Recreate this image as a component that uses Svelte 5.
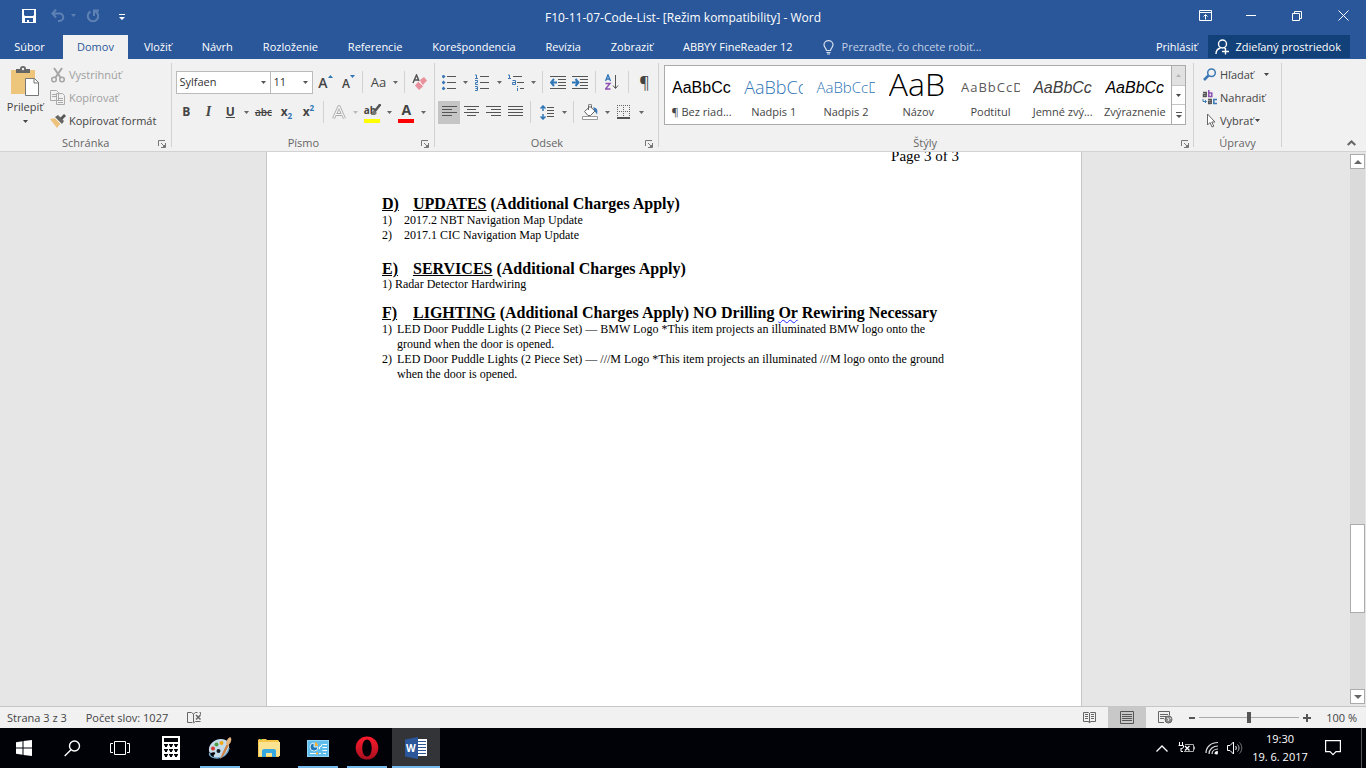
<script>
  const tabs = ['Vložiť', 'Návrh', 'Rozloženie', 'Referencie', 'Korešpondencia', 'Revízia', 'Zobraziť', 'ABBYY FineReader 12'];
  const styles = [
    { name: '¶ Bez riad...', sample: 'AaBbCc', cls: 'plain' },
    { name: 'Nadpis 1', sample: 'AaBbCc', cls: 'h1' },
    { name: 'Nadpis 2', sample: 'AaBbCcD', cls: 'h2' },
    { name: 'Názov', sample: 'AaB', cls: 'big' },
    { name: 'Podtitul', sample: 'AaBbCcD', cls: 'sub' },
    { name: 'Jemné zvý...', sample: 'AaBbCc', cls: 'subtle' },
    { name: 'Zvýraznenie', sample: 'AaBbCc', cls: 'emph' }
  ];
  let zoom = $state(50);
</script>

{#snippet caret()}
  <svg width="5" height="3" viewBox="0 0 5 3"><path d="M0 0h5L2.500 3z" fill="currentColor" /></svg>
{/snippet}

{#snippet drop(label, off = false)}
  <button class="drop" class:off aria-label={label}>{@render caret()}</button>
{/snippet}

{#snippet launcher(label)}
  <button class="launcher" aria-label={label}>
    <svg width="8" height="8" viewBox="0 0 8 8" fill="none" stroke="#777"><path d="M.5 6V.5H7M3 3l3.500 3.500M7.500 3v4.500H3" /><path d="M7 5v2H5z" fill="#777" /></svg>
  </button>
{/snippet}

{#snippet lines(rows, w = 15)}
  <svg width={w} height="13" viewBox="0 0 15 13" stroke="#555">
    {#each rows as r, i}<path d={`M${r[0]} ${i * 3 + 0.5}H${r[1]}`} />{/each}
  </svg>
{/snippet}

<div class="app">
  <header class="titlebar">
    <div class="qat">
      <button aria-label="Uložiť">
        <svg width="14" height="14" viewBox="0 0 14 14"><path d="M0 0h14v14H0z" fill="#fff" /><path d="M2 1h10v5l-1 1H3L2 6zM3 9h8v4H7v-2H5v2H3z" fill="#2a579a" /></svg>
      </button>
      <button class="undo" aria-label="Späť">
        <svg width="14" height="13" viewBox="0 0 14 13" fill="none" stroke="#5f82b5" stroke-width="2"><path d="M5 .5L1.500 4.500 5 8.500M2 4.500h6.500a3.700 3.700 0 0 1 0 7.500H7" /></svg>
      </button>
      <button class="qdrop" aria-label="História">{@render caret()}</button>
      <button class="redo" aria-label="Zopakovať">
        <svg width="14" height="14" viewBox="0 0 14 14" fill="none" stroke="#5f82b5" stroke-width="2"><path d="M4.500 2.500a5.200 5.200 0 1 0 5 0M8 7V1.500h5" /></svg>
      </button>
      <button class="custom" aria-label="Prispôsobiť panel">
        <svg width="6" height="6" viewBox="0 0 6 6" fill="#fff"><path d="M0 0h6v1H0zM0 3h6L3 6z" /></svg>
      </button>
    </div>
    <h1>F10-11-07-Code-List- [Režim kompatibility] - Word</h1>
    <div class="window">
      <button aria-label="Možnosti pása s nástrojmi"><svg width="13" height="11" viewBox="0 0 13 11" fill="none" stroke="#fff"><path d="M.5.5h12v10H.5zM.5 2.500h12M6.500 9.500V5M4.500 6.500l2-2 2 2" /></svg></button>
      <button aria-label="Minimalizovať"><svg width="10" height="11" viewBox="0 0 10 11" stroke="#fff"><path d="M0 5.500h10" /></svg></button>
      <button aria-label="Obnoviť"><svg width="10" height="10" viewBox="0 0 10 10" fill="none" stroke="#fff"><path d="M.5 2.500h7v7h-7zM2.500 2.500v-2h7v7h-2" /></svg></button>
      <button aria-label="Zavrieť"><svg width="11" height="11" viewBox="0 0 11 11" stroke="#fff"><path d="M.5.5l10 10M10.500.5l-10 10" /></svg></button>
    </div>
  </header>

  <nav class="tabs">
    <button class="file">Súbor</button>
    <button class="active">Domov</button>
    {#each tabs as t}<button class="tab">{t}</button>{/each}
    <label class="tell">
      <svg width="11" height="15" viewBox="0 0 11 15" fill="none" stroke="#d5dfee" stroke-width="1.200"><path d="M3.500 10.500C3.500 8.500 1 7.500 1 4.800a4.500 4.200 0 0 1 9 0c0 2.700-2.500 3.700-2.500 5.700zM3.500 12.500h4M4 14h3" /></svg>
      <input type="text" placeholder="Prezraďte, čo chcete robiť..." aria-label="Prezraďte, čo chcete robiť" />
    </label>
    <button class="login">Prihlásiť</button>
    <button class="share">
      <svg width="15" height="16" viewBox="0 0 15 16" fill="none" stroke="#fff" stroke-width="1.400"><circle cx="7.500" cy="5" r="4" /><path d="M1 15c0-3.500 2-5.500 4.500-6M9.500 9l1 1M7 12.500h7M10.500 9v6.500" /></svg>
      Zdieľaný prostriedok
    </button>
  </nav>

  <section class="ribbon">
    <div class="group">
      <div class="body cliprow">
        <button class="paste">
          <svg width="30" height="31" viewBox="0 0 30 31"><path d="M1 4h24v24H1z" fill="#edc67b" /><path d="M6 3h4a3 3 0 0 1 6 0h4v4H6z" fill="#666" /><circle cx="13" cy="3" r="1.200" fill="#f1f1f1" /><path d="M15.500 12.500h9l4 4v13h-13z" fill="#fff" stroke="#777" /><path d="M24 12v5h5" fill="none" stroke="#777" /></svg>
          <span>Prilepiť</span>{@render caret()}
        </button>
        <div class="stack">
          <button class="dim"><svg width="16" height="16" viewBox="0 0 16 16" fill="none" stroke="#a5a5a5" stroke-width="1.500"><path d="M4 1l6.500 9.500M12 1L5.500 10.500" stroke-width="2" /><circle cx="4" cy="12.500" r="2.300" /><circle cx="12" cy="12.500" r="2.300" /></svg>Vystrihnúť</button>
          <button class="dim"><svg width="16" height="15" viewBox="0 0 16 15" fill="#f1f1f1" stroke="#aaa"><path d="M.5.5h6l2 2v8h-8zM6.500 3.500h6l2 2v9h-8z" /><path d="M2 4.500h4M2 6.500h4M8 8.500h5M8 10.500h5M8 12.500h5" /></svg>Kopírovať</button>
          <button><svg width="16" height="15" viewBox="0 0 16 15"><path d="M0 6l6-1 5 5-4 5z" fill="#edc27a" /><path d="M5 4l3-2 6 6-2 3z" fill="#666" /><path d="M10 5l4-4 2 2-4 4z" fill="#555" /><path d="M5 5l6 6" stroke="#f1f1f1" /></svg>Kopírovať formát</button>
        </div>
      </div>
      <div class="caption">Schránka{@render launcher('Schránka')}</div>
    </div>

    <div class="group">
      <div class="body rows">
        <div class="row">
          <label class="combo face"><input type="text" value="Sylfaen" aria-label="Písmo" />{@render caret()}</label>
          <label class="combo size"><input type="text" value="11" aria-label="Veľkosť písma" />{@render caret()}</label>
          <button class="tool fontup" aria-label="Zväčšiť písmo">A<svg width="5" height="3" viewBox="0 0 5 3"><path d="M0 3h5L2.500 0z" fill="#2e75b6" /></svg></button>
          <button class="tool fontdown" aria-label="Zmenšiť písmo">A<svg width="5" height="3" viewBox="0 0 5 3"><path d="M0 0h5L2.500 3z" fill="#2e75b6" /></svg></button>
          <i class="sep tight"></i>
          <button class="tool case">Aa</button>{@render drop('Veľké a malé písmená')}
          <i class="sep"></i>
          <button class="tool" aria-label="Vymazať formátovanie"><svg width="16" height="17" viewBox="0 0 16 17"><path d="M1 9L4.500 1 7 7M2.500 6h4" stroke="#555" stroke-width="1.500" fill="none" /><path d="M8 6l4-3 3 3.500-4.500 5z" fill="#e8919d" /><path d="M7 7l4.500 5L7 16l-4-4.500z" fill="#e8919d" /><path d="M6.500 7.500l5 4.500" stroke="#fff" /></svg></button>
        </div>
        <div class="row">
          <button class="tool b">B</button><button class="tool it">I</button><button class="tool u">U</button>{@render drop('Podčiarknutie')}
          <button class="tool strike">abc</button>
          <button class="tool b">x<sub>2</sub></button><button class="tool b">x<sup>2</sup></button>
          <i class="sep"></i>
          <button class="tool" aria-label="Textové efekty"><svg width="14" height="15" viewBox="0 0 14 15"><path d="M1.500 13.500L7 1.500l5.500 12M4 9.500h6" fill="none" stroke="#aaa" stroke-width="3" /><path d="M1.500 13.500L7 1.500l5.500 12M4 9.500h6" fill="none" stroke="#f6f6f6" stroke-width="1.200" /></svg></button>{@render drop('Efekty', true)}
          <button class="tool mark" aria-label="Zvýraznenie textu"><span>ab</span><svg width="10" height="11" viewBox="0 0 10 11"><path d="M9.500 0L4 7" stroke="#555" stroke-width="2.500" /><path d="M0 11l2-5 4 3-2 2z" fill="#777" /></svg></button>{@render drop('Farba zvýraznenia')}
          <button class="tool color" aria-label="Farba písma">A</button>{@render drop('Farba')}
        </div>
      </div>
      <div class="caption">Písmo{@render launcher('Písmo')}</div>
    </div>

    <div class="group">
      <div class="body rows">
        <div class="row">
          <button class="tool" aria-label="Odrážky"><svg width="14" height="15" viewBox="0 0 14 15"><path d="M1 0h1v1h1v1H2v1H1V2H0V1h1zM1 6h1v1h1v1H2v1H1V8H0V7h1zM1 12h1v1h1v1H2v1H1v-1H0v-1h1z" fill="#3b78b5" stroke="#3b78b5" stroke-width=".6" /><path d="M5 1.500h9M5 7.500h9M5 13.500h9" stroke="#555" /></svg></button>{@render drop('Typ odrážok')}
          <button class="tool wide" aria-label="Číslovanie"><svg width="14" height="17" viewBox="0 0 14 17" fill="none" stroke="#3b78b5"><path d="M0 1h1.500v4M0 4.500h3M0 6.500h2.500v2H.5v2H3M0 12.500h2.500v4H0M.5 14.500h2" /><path d="M5 2.500h9M5 8.500h9M5 14.500h9" stroke="#555" /></svg></button>{@render drop('Typ číslovania')}
          <button class="tool wide" aria-label="Viacúrovňový zoznam"><svg width="17" height="17" viewBox="0 0 17 17" fill="none" stroke="#3b78b5"><path d="M0 1h1.500v4M0 4.500h3M4.500 6.500h3v4h-3v-2h3M9.500 12v1M9.500 14v3" /><path d="M5 2.500h9M9 8.500h7M12 14.500h4" stroke="#555" /></svg></button>{@render drop('Typ zoznamu')}
          <i class="sep"></i>
          <button class="tool" aria-label="Zmenšiť zarážku"><svg width="16" height="13" viewBox="0 0 16 13"><path d="M0 .5h16M8 3.500h8M8 6.500h8M8 9.500h8M0 12.500h16" stroke="#555" /><path d="M7 6.500H1M4 3L1 6.500 4 10" fill="none" stroke="#2e75b6" stroke-width="2" /></svg></button>
          <button class="tool" aria-label="Zväčšiť zarážku"><svg width="16" height="13" viewBox="0 0 16 13"><path d="M0 .5h16M8 3.500h8M8 6.500h8M8 9.500h8M0 12.500h16" stroke="#555" /><path d="M0 6.500h6M3.500 3l3 3.500-3 3.500" fill="none" stroke="#2e75b6" stroke-width="2" /></svg></button>
          <i class="sep"></i>
          <button class="tool wide" aria-label="Zoradiť"><svg width="14" height="16" viewBox="0 0 14 16" fill="none"><path d="M.5 7L3 .8 5.500 7M1.500 5h3" stroke="#2e75b6" stroke-width="1.300" /><path d="M.5 9.500h4.500l-4.500 5.500h5" stroke="#8a4fb0" stroke-width="1.400" /><path d="M10.500 1v13M8 11.500l2.500 3 2.500-3" stroke="#555" /></svg></button>
          <i class="sep"></i>
          <button class="tool pil">¶</button>
        </div>
        <div class="row">
          <button class="tool sel" aria-label="Zarovnať doľava">{@render lines([[0, 15], [0, 10], [0, 15], [0, 10]])}</button>
          <button class="tool" aria-label="Centrovať">{@render lines([[0, 15], [3, 12], [0, 15], [3, 12]])}</button>
          <button class="tool" aria-label="Zarovnať doprava">{@render lines([[0, 15], [5, 15], [0, 15], [5, 15]])}</button>
          <button class="tool" aria-label="Podľa okraja">{@render lines([[0, 15], [0, 15], [0, 15], [0, 15]])}</button>
          <i class="sep"></i>
          <button class="tool wide" aria-label="Riadkovanie"><svg width="14" height="15" viewBox="0 0 14 15" fill="none"><path d="M3 1v5M.5 3.500L3 1l2.500 2.500M3 9v5M.5 11.500L3 14l2.500-2.500" stroke="#2e75b6" stroke-width="1.500" /><path d="M7 2.500h7M7 5.500h7M7 8.500h7M7 11.500h7" stroke="#555" /></svg></button>{@render drop('Hodnota riadkovania')}
          <i class="sep"></i>
          <button class="tool wide" aria-label="Podfarbenie"><svg width="17" height="16" viewBox="0 0 17 16"><path d="M2.500 7.500L8 2.500l5 4.500-4.500 4.500H6z" fill="#fff" stroke="#666" /><path d="M6.500 6V1.500a1.500 1.500 0 0 1 3 0V4" fill="none" stroke="#666" /><path d="M11 3.500c4 0 5 2 4 7l-2-3z" fill="#3b78b5" /><path d="M.5 12.500h15v3H.5z" fill="#fff" stroke="#999" /></svg></button>{@render drop('Farba podfarbenia')}
          <button class="tool wide" aria-label="Orámovanie"><svg width="14" height="14" viewBox="0 0 14 14" fill="none" stroke="#666"><path d="M0 .5h14M0 6.500h14M.5 0v12M6.500 0v12M12.500 0v12" stroke-dasharray="1 1" /><path d="M0 13h13" stroke-width="2" stroke="#555" /></svg></button>{@render drop('Typ orámovania')}
        </div>
      </div>
      <div class="caption">Odsek{@render launcher('Odsek')}</div>
    </div>

    <div class="group stylegroup">
      <div class="body">
        <div class="gallery">
          <div class="items">
            {#each styles as s}
              <button><span class="sample {s.cls}">{s.sample}</span><span class="name">{s.name}</span></button>
            {/each}
          </div>
          <div class="gscroll">
            <button class="first" aria-label="Predchádzajúce štýly"><svg width="5" height="3" viewBox="0 0 5 3"><path d="M0 3h5L2.500 0z" fill="#b5b5b5" /></svg></button>
            <button aria-label="Ďalšie štýly">{@render caret()}</button>
            <button aria-label="Všetky štýly"><svg width="6" height="6" viewBox="0 0 6 6" fill="#555"><path d="M0 0h6v1H0zM0 3h6L3 6z" /></svg></button>
          </div>
        </div>
      </div>
      <div class="caption">Štýly{@render launcher('Štýly')}</div>
    </div>

    <div class="group edit">
      <div class="body stack">
        <button><svg width="14" height="13" viewBox="0 0 14 13" fill="none"><circle cx="8.500" cy="4.700" r="3.800" stroke="#3b78b5" stroke-width="1.500" /><path d="M5.500 7.500L1 12" stroke="#3b78b5" stroke-width="2.500" /></svg><span>Hľadať</span><em>{@render caret()}</em></button>
        <button aria-label="Nahradiť"><svg width="16" height="15" viewBox="0 0 16 15" fill="none" stroke-width="1.500"><path d="M1 2.500h3.200V7M4.200 4.500H1.500V6.500h2.700" stroke="#555" /><path d="M6.800 0v6.500h3V3h-3" stroke="#8a4fb0" /><path d="M1 9v2.500h3M3 10l1.500 1.500L3 13" stroke="#3b78b5" stroke-width="1" /><path d="M6 9.500h3.200V14M9.200 11.500H6.700v2h2.500" stroke="#555" /><path d="M15 9.500h-3.200v4H15" stroke="#3b78b5" /></svg><span>Nahradiť</span></button>
        <button><svg width="14" height="15" viewBox="0 0 14 15"><path d="M4.500 1v11l2.500-2.500 2 4.500 1.800-.8-2-4.200h3.200z" fill="#fff" stroke="#666" /></svg><span>Vybrať</span>{@render caret()}</button>
      </div>
      <div class="caption">Úpravy</div>
    </div>
    <div class="tail"><button aria-label="Zbaliť pás s nástrojmi"><svg width="9" height="6" viewBox="0 0 9 6" fill="none" stroke="#666" stroke-width="2"><path d="M.7 5L4.500 1.400 8.300 5" /></svg></button></div>
  </section>

  <main>
    <div class="canvas">
      <article>
        <p class="pageno">Page 3 of 3</p>
        <h2><u>D)</u><span><u>UPDATES</u> (Additional Charges Apply)</span></h2>
        <ol class="loose">
          <li><b>1)</b><span>2017.2 NBT Navigation Map Update</span></li>
          <li><b>2)</b><span>2017.1 CIC Navigation Map Update</span></li>
        </ol>
        <h2><u>E)</u><span><u>SERVICES</u> (Additional Charges Apply)</span></h2>
        <p class="item">1) Radar Detector Hardwiring</p>
        <h2><u>F)</u><span><u>LIGHTING</u> (Additional Charges Apply) NO Drilling <span class="wavy">Or</span> Rewiring Necessary</span></h2>
        <ol>
          <li><b>1)</b><span>LED Door Puddle Lights (2 Piece Set) — BMW Logo *This item projects an illuminated BMW logo onto the<br />ground when the door is opened.</span></li>
          <li><b>2)</b><span>LED Door Puddle Lights (2 Piece Set) — ///M Logo *This item projects an illuminated ///M logo onto the ground<br />when the door is opened.</span></li>
        </ol>
      </article>
    </div>
    <div class="scroll">
      <button aria-label="Nahor"><svg width="8" height="4" viewBox="0 0 8 4"><path d="M0 4h8L4 0z" fill="#666" /></svg></button>
      <div class="track"><div class="thumb"></div></div>
      <button aria-label="Nadol"><svg width="8" height="4" viewBox="0 0 8 4"><path d="M0 0h8L4 4z" fill="#666" /></svg></button>
    </div>
  </main>

  <footer class="status">
    <span>Strana 3 z 3</span>
    <span>Počet slov: 1027</span>
    <svg width="15" height="13" viewBox="0 0 15 13" fill="none" stroke="#666"><path d="M5.500 11.500H.5v-10h4l2 1.500v8.500M6.500 3l2-1.500h2M6.500 12l2-1.500h5M12.500 1.500h1v2" /><path d="M9 4l4.500 4.500M13.500 4L9 8.500" stroke-width="1.500" /></svg>
    <div class="views">
      <button aria-label="Režim čítania"><svg width="13" height="13" viewBox="0 0 13 13" fill="none" stroke="#666"><path d="M.5 1.500h5l1 1 1-1h5v9h-5l-1 1.500-1-1.500h-5zM6.500 2v10M2 3.500h3M2 5.500h3M2 7.500h3M8 3.500h3M8 5.500h3M8 7.500h3" /></svg></button>
      <button class="on" aria-label="Rozloženie pri tlači"><svg width="14" height="13" viewBox="0 0 14 13" fill="none" stroke="#555"><path d="M.5.5h13v12H.5zM2 3.500h10M2 5.500h10M2 7.500h10M2 9.500h10" /></svg></button>
      <button aria-label="Webové rozloženie"><svg width="15" height="13" viewBox="0 0 15 13" fill="none" stroke="#666"><path d="M6 11.500H.5V.5h11v4M2 3.500h8M2 5.500h6M2 7.500h4" /><circle cx="10.500" cy="8.500" r="3.500" fill="#888" /><path d="M9 7l2 1-1 2M12 6.500l1 1.500" stroke="#eee" /></svg></button>
    </div>
    <div class="zoomer">
      <button aria-label="Oddialiť"><svg width="6" height="8" viewBox="0 0 6 8"><path d="M0 3h6v2H0z" fill="#555" /></svg></button>
      <input type="range" min="0" max="100" bind:value={zoom} aria-label="Lupa" />
      <button aria-label="Priblížiť"><svg width="8" height="8" viewBox="0 0 8 8"><path d="M0 3h3V0h2v3h3v2H5v3H3V5H0z" fill="#555" /></svg></button>
    </div>
    <span>100 %</span>
  </footer>

  <div class="taskbar">
    <button aria-label="Štart"><svg width="16" height="16" viewBox="0 0 16 16" fill="#fff"><path d="M0 2.200L6.500 1.300v6.200H0zM7.500 1.100L16 0v7.500H7.500zM0 8.500h6.500v6.200L0 13.800zM7.500 8.500H16V16l-8.500-1.100z" /></svg></button>
    <button aria-label="Hľadať"><svg width="17" height="17" viewBox="0 0 17 17" fill="none" stroke="#fff" stroke-width="1.400"><circle cx="10.500" cy="6" r="5" /><path d="M7 9.700L.7 16" /></svg></button>
    <button aria-label="Zobrazenie úloh"><svg width="20" height="14" viewBox="0 0 20 14" fill="none" stroke="#fff"><path d="M4.500.5h11v13h-11zM3 2.500H.5v9H3M17 2.500h2.500v9H17" /></svg></button>
    <button class="first" aria-label="Kalkulačka"><svg width="18" height="24" viewBox="0 0 18 24"><path d="M0 0h18v24H0z" fill="#fff" /><path d="M2 2h14v4H2z" fill="#000208" /><path d="M2 8h4v1.500H5V11H3V9.500H2zM7 8h4v1.500h-1V11H8V9.500H7zM12 8h4v1.500h-1V11h-2V9.500H12zM2 13h4v1.500H5V16H3v-1.500H2zM7 13h4v1.500h-1V16H8v-1.500H7zM12 13h4v1.500h-1V16h-2v-1.500H12zM2 18h4v1.500H5V21H3v-1.500H2zM7 18h4v1.500h-1V21H8v-1.500H7zM12 18h4v1.500h-1V21h-2v-1.500H12z" fill="#000208" /></svg></button>
    <button class="run" aria-label="Skicár"><svg width="24" height="24" viewBox="0 0 24 24"><path d="M1 15C0 9 6 3 13 3c6 0 9 4 8 9-1 6-6 10-12 10-4 0-4-3-2-4 1-2-2-2-4-1-1 0-2-1-2-2z" fill="#c4dce9" /><path d="M2 17c-1 1 0 5 7 5 6 0 11-4 12-10" fill="none" stroke="#72a8c8" stroke-width="1.500" /><circle cx="5" cy="12.500" r="2" fill="#d63b2f" /><circle cx="8.500" cy="8.500" r="2" fill="#4d9e45" /><circle cx="13.500" cy="7" r="2" fill="#f2a71b" /><circle cx="10.500" cy="15" r="2" fill="#101820" /><path d="M12 23c2-5 4-10 7-15l2 1c-3 6-5 11-9 14z" fill="#cf8044" /><path d="M18 8c0-3 1-5 4-7l1 1c1 3-1 6-3 7z" fill="#e5b580" /></svg></button>
    <button aria-label="Prieskumník"><svg width="22" height="20" viewBox="0 0 22 20"><path d="M0 2l1-1h7l1 1h11l1 1v16H0z" fill="#f5c64a" /><path d="M1 4h21v14H1z" fill="#fce391" /><path d="M2 1h2v1H2z" fill="#5db85c" /><path d="M4 19v-7l2-1h10l2 1v7h-4v-4H8v4z" fill="#36a9e0" /></svg></button>
    <button class="run" aria-label="Ovládací panel"><svg width="22" height="17" viewBox="0 0 22 17"><path d="M0 0h22v17H0z" fill="#8ed3f4" /><path d="M1 1h20v15H1z" fill="#5fbdee" /><path d="M7 3v4h4a4 4 0 1 1-4-4z" fill="#1f78b8" stroke="#fff" stroke-width=".8" /><path d="M8 2a4 4 0 0 1 3 4H8z" fill="#f6b23b" /><path d="M12.500 9V7l2-1V4.500M15.500 4.500H20M15.500 7.500H20M15.500 10.500H20M3 13.500h6M12 13.500h2M16 13.500h3" stroke="#fff" fill="none" /><path d="M9 13.500h2" stroke="#f6b23b" stroke-width="2" /></svg></button>
    <button class="run" aria-label="Opera"><svg width="24" height="24" viewBox="0 0 24 24"><defs><linearGradient id="op" x2="0" y2="1"><stop stop-color="#ff1b2d" /><stop offset="1" stop-color="#a8101f" /></linearGradient></defs><path d="M12 .5a11.300 11.500 0 1 0 0 23 11.300 11.500 0 0 0 0-23zm0 3c3 0 4.700 4 4.700 8.500s-1.700 8.500-4.700 8.500-4.700-4-4.700-8.500 1.700-8.500 4.700-8.500z" fill="url(#op)" fill-rule="evenodd" /></svg></button>
    <button class="run active" aria-label="Word"><span class="wlogo"><svg width="22" height="22" viewBox="0 0 22 22"><path d="M12 2h10v17H12z" fill="#fff" /><path d="M13 4.500h8M13 7.500h8M13 10.500h8M13 13.500h8M13 16.500h8" stroke="#2b579a" /><path d="M0 2.500L13 0v22L0 19.500z" fill="#2b579a" /></svg><b>W</b></span></button>

    <div class="tray">
      <button aria-label="Skryté ikony"><svg width="12" height="7" viewBox="0 0 12 7" fill="none" stroke="#fff" stroke-width="1.300"><path d="M.5 6.500L6 1l5.500 5.500" /></svg></button>
      <svg class="bat" width="17" height="12" viewBox="0 0 17 12" fill="none" stroke="#fff"><path d="M1.500 0v3M4.500 0v3M.5 3.500h5v2L3 7M3 6v3.500h2" /><path d="M7 2.500h8.500v7H6M16.500 4.500v3" stroke="#aaa" /><path d="M7 4l4.500 4.500M11.500 4L7 8.500" stroke-width="1.300" /></svg>
      <svg class="wifi" width="14" height="14" viewBox="0 0 14 14" fill="none" stroke="#ddd" stroke-width="1.200"><path d="M1 12C1 6 6 1.500 13 1.500M4 13c0-4.500 4-8 9-8M7 13c0-3 2.500-5 6-5" /><path d="M10 13c0-1.500 1-2.500 3-2.500" /><circle cx="11.500" cy="12" r="1.500" fill="#fff" stroke="none" /></svg>
      <svg class="vol" width="17" height="14" viewBox="0 0 17 14" fill="none" stroke="#fff"><path d="M.5 4.500h2.500l3.500-3.500v12L3 9.500H.5zM8.500 5c1 1 1 3 0 4" /><path d="M10.500 3.500c2 2 2 5 0 7" stroke="#bbb" /><path d="M12.500 1.500c3 3 3 8 0 11" stroke="#777" /></svg>
      <div class="clock"><span>19:30</span><span>19. 6. 2017</span></div>
      <button class="act" aria-label="Centrum akcií"><svg width="16" height="16" viewBox="0 0 16 16" fill="none" stroke="#fff" stroke-width="1.200"><path d="M.6.6h14.800v11h-4.400l-3 3-3-3H.6z" /></svg></button>
      <i class="edge"></i>
    </div>
  </div>
</div>

<style>
  :global(body) { margin: 0; }
  .app { height: 100vh; display: flex; flex-direction: column; overflow: hidden; font: 11px/16px "Open Sans", "Noto Sans", sans-serif; color: #444; background: #e6e6e6; }
  .app * { box-sizing: border-box; }
  button { border: 0; padding: 0; background: none; font: inherit; color: inherit; display: flex; align-items: center; justify-content: center; white-space: nowrap; }
  input { font: inherit; color: inherit; border: 0; padding: 0; margin: 0; background: none; min-width: 0; outline: none; }
  svg { flex: none; display: block; }

  .titlebar { height: 35px; background: #2a579a; color: #fff; display: grid; grid-template-columns: 1fr auto 1fr; align-items: center; padding-bottom: 4px; }
  .titlebar h1 { font: inherit; font-size: 12px; margin: 0; padding-top: 4px; }
  .qat { display: flex; align-items: center; padding-left: 22px; }
  .undo { margin-left: 15px; }
  .qdrop { margin-left: 6px; color: #5f82b5; }
  .redo { margin-left: 10px; }
  .custom { margin-left: 19px; padding-top: 3px; }
  .window { display: flex; justify-content: flex-end; }
  .window button { width: 46px; height: 30px; }

  .tabs { height: 24px; background: #2a579a; color: #fff; display: flex; }
  .tabs button { padding: 0 14px; }
  .tabs .tab { margin-left: 2px; }
  .tabs .file { width: 63px; padding: 0 4px 0 0; }
  .tabs .active { background: #f1f1f1; color: #2a579a; }
  .tell { display: flex; align-items: center; gap: 8px; padding-left: 16px; flex: 1; }
  .tell input { flex: 1; }
  .tell input::placeholder { color: #c3d0e5; opacity: 1; }
  .tabs .login { padding: 0 11px; }
  .tabs .share { background: #124078; padding: 0 9px 0 7px; gap: 5px; margin: 0 16px 1px 0; }

  .ribbon { height: 93px; background: #f1f1f1; border-bottom: 1px solid #d2d2d2; display: flex; flex: none; }
  .group { display: flex; flex-direction: column; position: relative; border-right: 1px solid #d2d2d2; margin: 4px 0; padding: 0 3px; }
  .body { height: 72px; flex: none; }
  .caption { color: #666; text-align: center; position: relative; height: 16px; flex: none; }
  .launcher { position: absolute; right: 2px; top: 5px; }
  .cliprow { display: flex; }
  .paste { flex-direction: column; justify-content: flex-start; width: 44px; gap: 2px; padding-top: 3px; }
  .paste span { margin-bottom: 3px; }
  .stack { display: flex; flex-direction: column; align-items: flex-start; }
  .stack button { height: 23px; gap: 3px; }
  .cliprow .stack { padding: 0 12px 0 3px; }
  .dim { color: #a0a0a0; }
  .rows { display: flex; flex-direction: column; gap: 6px; padding-top: 7px; }
  .row { display: flex; align-items: center; height: 24px; }
  .tool { width: 22px; height: 23px; flex: none; position: relative; }
  .tool.wide, .tool.case { width: 24px; }
  .sel { background: #c5c5c5; }
  .drop { width: 10px; height: 23px; color: #666; flex: none; }
  .drop.off { color: #bbb; }
  .sep { width: 1px; height: 22px; background: #d2d2d2; margin: 0 4px; flex: none; }
  .sep.tight { margin: 0 3px; }
  .combo { display: flex; align-items: center; height: 23px; background: #fff; border: 1px solid #bbb; padding: 0 4px 0 2px; color: #555; }
  .combo input { flex: 1; width: 0; color: #333; }
  .face { width: 94px; border-right: 0; margin-left: 1px; }
  .size { width: 43px; }
  .fontup, .fontdown { font-weight: 600; align-items: flex-start; }
  .fontup { font-size: 14px; line-height: 24px; width: 24px; }
  .fontdown { font-size: 12px; line-height: 25px; }
  .fontup svg, .fontdown svg { margin-top: 4px; }
  .case { font-size: 13px; }
  .b, .u { font-size: 12px; font-weight: 700; }
  .it { font-family: "Liberation Serif", serif; font-style: italic; font-weight: 700; font-size: 14px; }
  .u { text-decoration: underline; }
  .strike { text-decoration: line-through; width: 24px; font-size: 10px; font-weight: 600; }
  .tool sub, .tool sup { font-size: 8px; line-height: 8px; color: #2e75b6; }
  .tool sub { padding-top: 8px; }
  .tool sup { padding-bottom: 8px; }
  .mark { width: 24px; font-size: 10px; font-weight: 700; padding-bottom: 5px; }
  .mark svg { margin-left: -5px; }
  .color { width: 24px; font-size: 14px; font-weight: 700; padding-bottom: 4px; }
  .mark::after, .color::after { content: ""; position: absolute; left: 4px; right: 4px; bottom: 1px; height: 4px; background: #ff0; }
  .color::after { background: #f00; }
  .pil { font-size: 16px; }

  .stylegroup { flex: 1; min-width: 0; padding: 0 7px 0 5px; }
  .stylegroup .launcher { right: -3px; }
  .gallery { display: flex; height: 60px; margin-top: 2px; border: 1px solid #ababab; background: #fff; }
  .items { flex: 1; display: flex; overflow: hidden; }
  .items button { flex: 1; min-width: 0; flex-direction: column; justify-content: flex-start; padding: 7px 6px 0; }
  .sample { width: 59px; height: 23px; overflow: hidden; text-align: left; flex: none; font: 16px/29px "Open Sans", sans-serif; color: #000; }
  .name { margin-top: 8px; }
  .plain, .subtle, .emph { font-family: "Liberation Sans", sans-serif; }
  .h1 { color: #2e74b5; font-size: 18px; font-weight: 300; }
  .h2 { color: #2e74b5; font-size: 15px; font-weight: 300; }
  .big { font-size: 32px; line-height: 21px; font-weight: 300; }
  .sub { color: #5a5a5a; font-size: 13px; letter-spacing: 1px; }
  .subtle { color: #404040; font-style: italic; }
  .emph { font-style: italic; }
  .gscroll { width: 14px; border-left: 1px solid #ababab; display: flex; flex-direction: column; }
  .gscroll button { flex: 1; border-top: 1px solid #c5c5c5; }
  .gscroll .first { background: #e1e1e1; border-top: 0; }

  .edit { padding: 0 8px; min-width: 88px; }
  .edit button { gap: 2px; }
  .edit button > svg:first-child { width: 16px; }
  .edit em { margin-left: 8px; }
  .tail { width: 84px; display: flex; justify-content: flex-end; align-items: flex-end; padding: 0 10px 5px 0; }

  main { flex: 1; display: flex; min-height: 0; }
  .canvas { flex: 1; display: flex; justify-content: center; overflow: hidden; padding-right: 2px; }
  article { width: 816px; flex: none; background: #fff; border: solid #c6c6c6; border-width: 0 1px; padding: 0 115px; color: #000; font: 12px/15px "Liberation Serif", serif; white-space: nowrap; }
  article p, article h2, article ol { margin: 0; padding: 0; }
  .pageno { font-size: 15px; line-height: 18px; text-align: right; }
  article .pageno { margin: -5px 0 30px; padding-right: 7px; }
  article h2 { font-size: 16px; line-height: 17px; padding-bottom: 1px; display: flex; }
  article h2 > u { width: 31px; }
  article ol { list-style: none; }
  li { display: flex; }
  li b { font-weight: 400; width: 15px; }
  .loose b { width: 22px; }
  article .loose { margin-bottom: 17px; }
  article .item { line-height: 13px; margin-bottom: 13px; }
  .wavy { text-decoration: underline wavy #22f 1px; }

  .scroll { width: 16px; display: flex; flex-direction: column; padding: 2px 1px 2px 0; }
  .scroll button { height: 15px; background: #fff; border: 1px solid #ababab; }
  .track { flex: 1; background: #dadada; display: flex; flex-direction: column; justify-content: flex-end; padding-bottom: 76px; }
  .thumb { height: 20%; background: #fff; border: 1px solid #ababab; }

  .status { height: 22px; flex: none; background: #f1f1f1; border-top: 1px solid #c6c6c6; display: flex; align-items: center; padding: 0 9px 0 7px; gap: 19px; }
  .views { margin-left: auto; display: flex; align-self: stretch; }
  .views button { width: 38px; }
  .views .on { background: #c8c8c8; }
  .status .views { margin-right: -14px; }
  .zoomer { display: flex; align-items: center; gap: 4px; margin-right: -4px; }
  .zoomer input { appearance: none; width: 100px; height: 11px; background: linear-gradient(#aaa, #aaa) center / 100% 1px no-repeat; }
  .zoomer input::-webkit-slider-thumb { appearance: none; width: 4px; height: 11px; background: #555; }

  .taskbar { height: 40px; flex: none; background: #000208; color: #fff; display: flex; }
  .taskbar > button { width: 48px; margin-right: 1px; }
  .taskbar > button:nth-child(-n+3) { margin-right: 0; }
  .taskbar > .first { margin-left: 3px; }
  .run { position: relative; }
  .run::after { content: ""; position: absolute; left: 4px; right: 4px; bottom: 0; height: 2px; background: #76b9ed; }
  .active.run { background: #333438; }
  .active.run::after { left: 0; right: 0; }
  .wlogo { position: relative; }
  .wlogo b { position: absolute; left: 1px; top: 3px; font-size: 10px; }
  .tray { margin-left: auto; display: flex; align-items: center; }
  .bat { margin-left: 10px; }
  .wifi { margin-left: 10px; }
  .vol { margin-left: 8px; }
  .clock { display: flex; flex-direction: column; align-items: center; line-height: 18px; margin-left: 8px; width: 56px; white-space: nowrap; }
  .act { margin-left: 17px; }
  .edge { width: 1px; align-self: stretch; background: #555; margin: 0 4px 0 20px; }
</style>
